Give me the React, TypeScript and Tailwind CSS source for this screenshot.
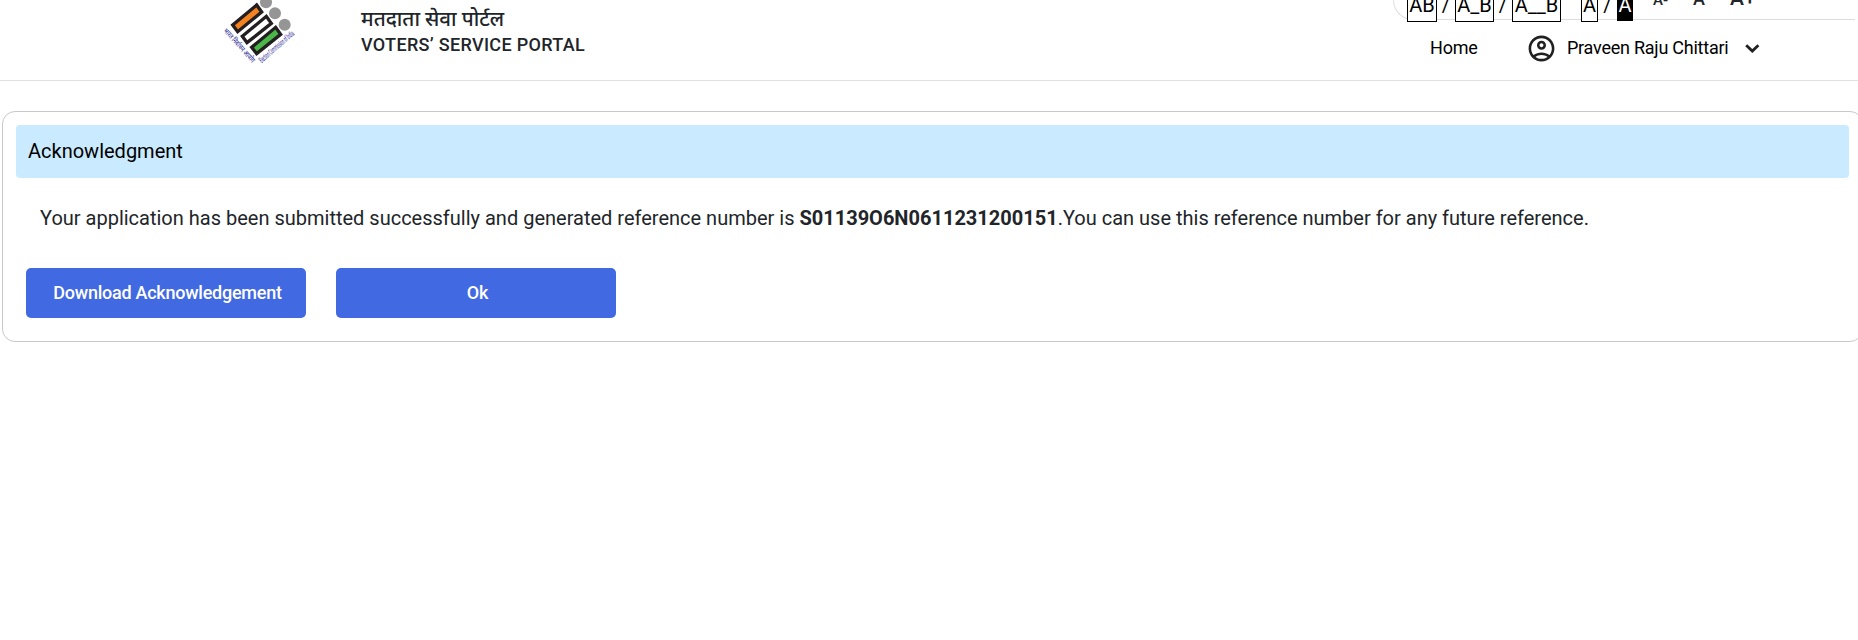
function Logo() {
  return (
    <svg className="block h-[70px] w-[100px]" viewBox="0 0 300 210">
      <g fill="#959595">
        <circle cx="168" cy="7" r="18" />
        <circle cx="195" cy="40" r="18" />
        <circle cx="224" cy="74" r="18" />
      </g>
      <g stroke="#231f20" strokeWidth="10">
        <path d="M68 75 L140 15 L155 36 L83 95 Z" fill="#f58220" />
        <path d="M97 109 L169 49 L184 70 L111 128 Z" fill="#fff" />
        <path d="M125 142 L197 82 L212 103 L140 161 Z" fill="#4bb748" />
      </g>
      <g fill="#34349a" fontFamily="'Noto Sans', Roboto, sans-serif" fontWeight="500">
        <text transform="translate(39 93) rotate(48)" fontSize="22" textLength="130" lengthAdjust="spacingAndGlyphs">भारत निर्वाचन आयोग</text>
        <text transform="translate(155 190) rotate(-41)" fontSize="24" textLength="132" lengthAdjust="spacingAndGlyphs">Election Commission of India</text>
      </g>
    </svg>
  );
}

function AccessibilityBar() {
  return (
    <div className="-mt-[22px] ml-[1393px] flex h-[42px] w-[462px] rounded-l-[20px] border border-r-0 border-[#dedede] pl-[13px] text-[20px] leading-[32px] text-black">
      <div className="flex h-[43px] items-end whitespace-pre">
        <span className="h-[34px] w-[30px] border border-black bg-white text-center">AB</span>
        <span className="h-[34px] w-[18px] text-center leading-[34px]">/</span>
        <span className="h-[34px] w-[39px] border border-black bg-white text-center">A_B</span>
        <span className="h-[34px] w-[18px] text-center leading-[34px]">/</span>
        <span className="h-[34px] w-[49px] border border-black bg-white text-center">A__B</span>
        <span className="ml-[20px] h-[34px] w-[17px] border border-black bg-white text-center">A</span>
        <span className="h-[34px] w-[19px] text-center leading-[34px]">/</span>
        <span className="mb-px h-[33px] w-[16px] bg-black text-center leading-[34px] text-white">A</span>
      </div>
      <div className="flex h-[30px] items-baseline pt-[3px] font-medium text-[#212529]">
        <span className="ml-[20px] w-[40px] text-[15px]">A-</span>
        <span className="w-[37px] pt-px text-[18px]">A</span>
        <span className="text-[21px]">A+</span>
      </div>
    </div>
  );
}

export default function App() {
  return (
    <div className="h-[640px] w-full overflow-hidden bg-white font-['Roboto','Noto_Sans',sans-serif] text-[#212529]">
      <header className="flex h-[81px] flex-col overflow-hidden border-b border-[#e0e0e0]">
        <div className="flex h-[80px]">
          <div className="flex h-[80px] w-0 shrink-0">
            <div className="ml-[210px] h-[70px] w-[100px] shrink-0">
              <Logo />
            </div>
            <div className="ml-[51px] shrink-0 whitespace-nowrap pt-[5px] font-medium">
              <div className="text-[20.6px] leading-[28px]">मतदाता सेवा पोर्टल</div>
              <div className="text-[18px] leading-[24px] tracking-[0.32px]">VOTERS’ SERVICE PORTAL</div>
            </div>
          </div>
          <div className="flex w-full flex-col">
            <AccessibilityBar />
            <nav className="flex h-[57px] items-center pl-[1430px] text-[18px] text-black">
              <a className="w-[96px] pb-[2px] tracking-[-0.2px]">Home</a>
              <svg className="size-[31px] shrink-0" viewBox="0 0 24 24" fill="#212121">
                <path d="M12 2C6.48 2 2 6.48 2 12s4.48 10 10 10 10-4.48 10-10S17.52 2 12 2zM7.35 18.5C8.66 17.56 10.26 17 12 17s3.34.56 4.65 1.5C15.34 19.44 13.74 20 12 20s-3.34-.56-4.65-1.5zm10.79-1.38C16.45 15.8 14.32 15 12 15s-4.45.8-6.14 2.12C4.7 15.73 4 13.95 4 12c0-4.42 3.58-8 8-8s8 3.58 8 8c0 1.95-.7 3.73-1.86 5.12zM12 6c-1.93 0-3.5 1.57-3.5 3.5S10.07 13 12 13s3.5-1.57 3.5-3.5S13.93 6 12 6zm0 5c-.83 0-1.5-.67-1.5-1.5S11.17 8 12 8s1.5.67 1.5 1.5S12.83 11 12 11z" />
              </svg>
              <span className="ml-[10px] w-[178px] whitespace-nowrap pb-[2px] tracking-[-0.24px]">Praveen Raju Chittari</span>
              <svg className="h-[9px] w-[15px] shrink-0" viewBox="0 0 15 9" fill="none" stroke="#212121" strokeWidth="2.8">
                <path d="M1.2 1.2 L7.3 7.1 L13.4 1.2" />
              </svg>
            </nav>
          </div>
        </div>
      </header>
      <main className="ml-[2px] mt-[30px] h-[231px] w-[1861px] rounded-[13px] border border-[#c8c8c8] p-[13px]">
        <h1 className="flex h-[53px] items-center rounded-[4px] bg-[#caebff] pb-[2px] pl-[12px] text-[20px] text-black">Acknowledgment</h1>
        <p className="ml-[24px] mt-[25px] whitespace-nowrap text-[20px] leading-[30px]">
          Your application has been submitted successfully and generated reference number is <b className="font-bold">S01139O6N0611231200151</b>.You can use this reference number for any future reference.
        </p>
        <div className="ml-[10px] mt-[35px] flex gap-[30px] text-[18px] font-medium tracking-[-0.25px] text-white">
          <button className="h-[50px] w-[280px] rounded-[5px] bg-[#4169e1] pb-[2px] pl-[3px]">Download Acknowledgement</button>
          <button className="h-[50px] w-[280px] rounded-[5px] bg-[#4169e1] pb-[2px] pl-[3px]">Ok</button>
        </div>
      </main>
    </div>
  );
}
